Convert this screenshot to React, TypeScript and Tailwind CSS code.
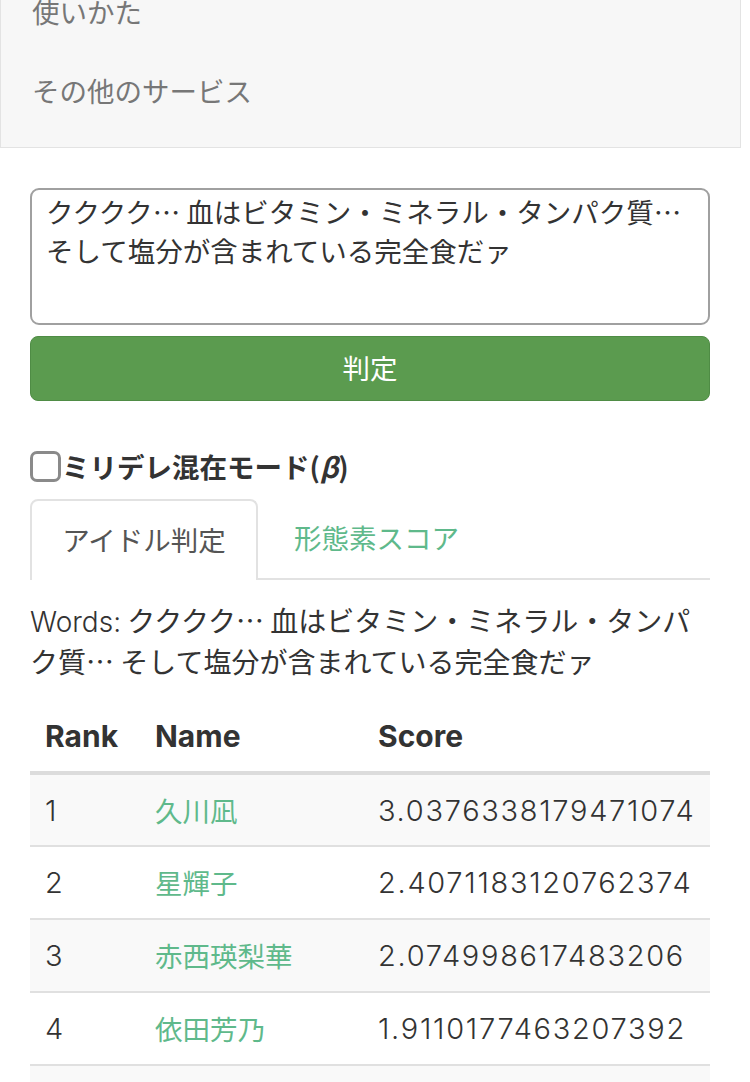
import React from "react";

const font = { fontFamily: '"Noto Sans CJK JP", "Noto Sans", sans-serif' };
const latin = { fontFamily: 'Inter, "Noto Sans CJK JP", sans-serif' };

const rows = [
  { rank: 1, name: "久川凪", score: "3.0376338179471074" },
  { rank: 2, name: "星輝子", score: "2.4071183120762374" },
  { rank: 3, name: "赤西瑛梨華", score: "2.074998617483206" },
  { rank: 4, name: "依田芳乃", score: "1.9110177463207392" },
  { rank: 5, name: "", score: "" },
];

const text = "クククク… 血はビタミン・ミネラル・タンパク質… そして塩分が含まれている完全食だァ";

export default function App() {
  return (
    <div className="w-[750px] h-[1082px] overflow-hidden bg-white text-[#333] text-[27.5px] leading-[39px]" style={font}>
      {/* collapsed navbar */}
      <div className="w-[741px] h-[148px] bg-[#f7f7f7] border-r border-b border-l border-[#e3e3e3] overflow-hidden">
        <ul className="-mt-[28px] pl-[31px] text-[#777]">
          <li className="h-[79px] flex items-center">使いかた</li>
          <li className="h-[79px] flex items-center">その他のサービス</li>
        </ul>
      </div>

      <div className="w-[680px] ml-[30px] mt-[40px]">
        <textarea
          readOnly
          defaultValue={text}
          className="block w-full h-[137px] resize-none border-2 border-[#a0a0a0] rounded-[9px] pl-[14px] pr-[6px] pt-[2px] text-[27.5px] leading-[39px] text-[#333] outline-none"
          style={font}
        />
        <button className="mt-[11px] w-full h-[65px] rounded-[8px] bg-[#5b9b4f] border border-[#4f8c45] text-white text-[27.5px] pb-[3px]">
          判定
        </button>

        <label className="mt-[50px] flex items-center h-[31px]">
          <span className="w-[31px] h-[31px] rounded-[7px] border-[3px] border-[#8a8a8a] bg-white"></span>
          <span className="font-bold ml-[1px]">ミリデレ混在モード(<i>β</i>)</span>
        </label>

        <div className="mt-[17px] flex border-b-2 border-[#e2e2e2] h-[81px]">
          <div className="w-[228px] -mb-[2px] border-2 border-b-0 border-[#e2e2e2] rounded-t-[8px] bg-white flex items-center justify-center text-[#555] pb-[3px]">
            アイドル判定
          </div>
          <div className="ml-[36px] flex items-center text-[#5fb98b] pb-[3px]">形態素スコア</div>
        </div>

        <p className="mt-[21px] leading-[39px] text-[28px]">
          <span style={latin} className="font-light">Words:</span> {text}
        </p>

        <table className="mt-[20px] w-full border-collapse table-fixed">
          <colgroup>
            <col className="w-[110px]" />
            <col className="w-[223px]" />
            <col />
          </colgroup>
          <thead>
            <tr className="h-[72px] border-b-4 border-[#dcdcdc] text-[30px]" style={latin}>
              <th className="text-left font-bold pl-[15px] text-[#333]">Rank</th>
              <th className="text-left font-bold pl-[15px] text-[#333]">Name</th>
              <th className="text-left font-bold pl-[15px] text-[#333]">Score</th>
            </tr>
          </thead>
          <tbody>
            {rows.map((r, i) => (
              <tr key={r.rank} className={`h-[73px] border-b-2 border-[#e0e0e0] ${i % 2 === 0 ? "bg-[#f9f9f9]" : "bg-white"}`}>
                <td className="pl-[15px] font-light text-[29px]" style={latin}>{r.name ? r.rank : ""}</td>
                <td className="pl-[15px] text-[#5fb98b]">{r.name}</td>
                <td className="pl-[15px] font-light text-[29px] tracking-[1.7px]" style={latin}>{r.score}</td>
              </tr>
            ))}
          </tbody>
        </table>
      </div>
    </div>
  );
}
